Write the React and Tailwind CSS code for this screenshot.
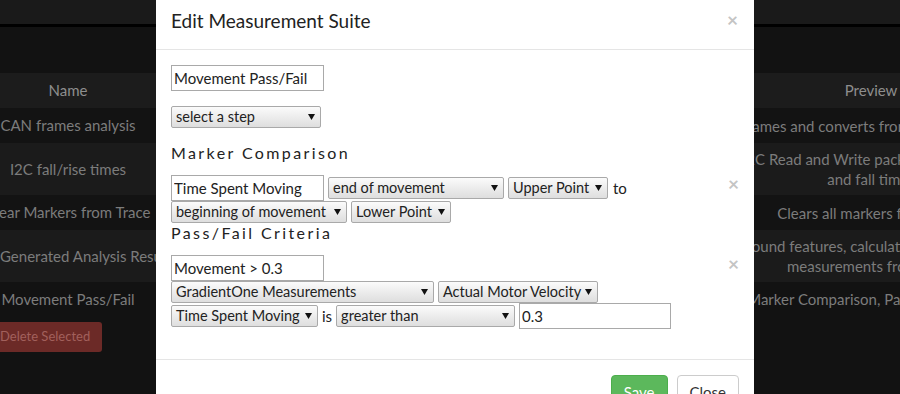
import React from 'react';

const Arrow = () => (
  <svg width="7" height="6" viewBox="0 0 7 6" className="shrink-0">
    <polygon points="0,0 7,0 3.5,6" fill="#111" />
  </svg>
);

const Select = ({ width, children }) => (
  <div
    className={`flex h-[22px] shrink-0 items-center justify-between gap-[4px] rounded-[2px] border border-[#a9a9a9] bg-linear-to-b from-[#fbfbfb] to-[#dedede] pl-[4px] pr-[5px] text-[14.5px] text-[#222] ${width}`}
  >
    <span className="whitespace-nowrap">{children}</span>
    <Arrow />
  </div>
);

const TextBox = ({ width, value }) => (
  <input
    readOnly
    value={value}
    className={`h-[26px] shrink-0 border border-[#a9a9a9] bg-white px-[2px] text-[15px] text-[#222] outline-none ${width}`}
  />
);

const Remove = () => (
  <span className="mt-[-1px] text-[19px] font-bold leading-[20px] text-[#c4c4c4]">×</span>
);

const rows = [
  { name: 'CAN frames analysis', preview: ['Parses CAN frames and converts from raw hex bytes into signals'], h: 'h-[35px]', bg: 'bg-[#131313]', left: false },
  { name: 'I2C fall/rise times', preview: ['Measures I2C Read and Write packets and computes its rise', 'and fall times'], h: 'h-[52px]', bg: 'bg-[#1b1b1b]', left: false },
  { name: 'Clear Markers from Trace', preview: ['Clears all markers from trace'], h: 'h-[35px]', bg: 'bg-[#131313]', left: false },
  { name: 'Generated Analysis Results', preview: ['Lists found features, calculations and key results', 'measurements from trace'], h: 'h-[52px]', bg: 'bg-[#1b1b1b]', left: true },
  { name: 'Movement Pass/Fail', preview: ['Marker Comparison, Pass/Fail Criteria'], h: 'h-[34px]', bg: 'bg-[#121212]', left: false },
];

export default function App() {
  return (
    <div className="relative h-[394px] w-[900px] overflow-hidden bg-[#121212] font-['Lato',sans-serif]">
      {/* page behind the modal */}
      <div className="h-[24px] bg-[#1a1a1a]" />
      <div className="h-[3px] bg-black" />
      <div className="h-[46px]" />
      <div className="ml-[-12px] w-[1003px] text-[15px] text-[#7c7c7c]">
        <div className="grid h-[35px] grid-cols-[160px_603px_240px] items-center bg-[#1c1c1c] text-[#8e8e8e]">
          <div className="text-center">Name</div>
          <div />
          <div className="text-center">Preview</div>
        </div>
        {rows.map((r) => (
          <div key={r.name} className={`grid grid-cols-[160px_603px_240px] items-center ${r.h} ${r.bg}`}>
            <div className={r.left ? 'whitespace-nowrap pl-[12px]' : 'flex justify-center whitespace-nowrap'}>{r.name}</div>
            <div />
            <div className="flex flex-col items-center leading-[20px]">
              {r.preview.map((line) => (
                <div key={line} className="whitespace-nowrap">{line}</div>
              ))}
            </div>
          </div>
        ))}
        <div className="mt-[6px] flex">
          <div className="flex h-[30px] items-center rounded-[3px] bg-[#6c2a27] px-[12px] text-[13px] text-[#a2605c]">
            Delete Selected
          </div>
        </div>
      </div>

      {/* modal */}
      <div className="absolute left-[156px] top-0 w-[598px] bg-white text-[#333]">
        <div className="flex h-[50px] items-start justify-between border-b border-[#e5e5e5] pl-[15px] pr-[16px] pt-[11px]">
          <h4 className="text-[19px] leading-[20px] text-[#222]">Edit Measurement Suite</h4>
          <Remove />
        </div>

        <div className="px-[15px] pb-[30px] pt-[15px]">
          <TextBox width="w-[153px]" value="Movement Pass/Fail" />
          <div className="mt-[15px]">
            <Select width="w-[150px]">select a step</Select>
          </div>

          <h5 className="mb-[12px] mt-[15px] text-[16px] leading-[20px] tracking-[2.4px] text-[#222]">Marker Comparison</h5>
          <div className="flex items-start justify-between">
            <div className="flex flex-col">
              <div className="flex items-center gap-[4px]">
                <TextBox width="w-[153px]" value="Time Spent Moving" />
                <Select width="w-[176px]">end of movement</Select>
                <Select width="w-[100px]">Upper Point</Select>
                <span className="ml-[1px] text-[15px] text-[#222]">to</span>
              </div>
              <div className="flex items-center gap-[4px]">
                <Select width="w-[176px]">beginning of movement</Select>
                <Select width="w-[100px]">Lower Point</Select>
              </div>
            </div>
            <Remove />
          </div>

          <h5 className="mb-[12px] text-[16px] leading-[20px] tracking-[2.4px] text-[#222]">Pass/Fail Criteria</h5>
          <div className="flex items-start justify-between">
            <div className="flex flex-col">
              <TextBox width="w-[153px]" value="Movement > 0.3" />
              <div className="flex items-center gap-[4px]">
                <Select width="w-[263px]">GradientOne Measurements</Select>
                <Select width="w-[160px]">Actual Motor Velocity</Select>
              </div>
              <div className="flex h-[26px] items-center gap-[4px]">
                <Select width="w-[147px]">Time Spent Moving</Select>
                <span className="text-[15px] text-[#222]">is</span>
                <Select width="w-[179px]">greater than</Select>
                <TextBox width="w-[152px]" value="0.3" />
              </div>
            </div>
            <Remove />
          </div>
        </div>

        <div className="flex justify-end gap-[9px] border-t border-[#e5e5e5] px-[15px] pb-[15px] pt-[15px]">
          <button className="h-[34px] rounded-[4px] border border-[#4cae4c] bg-[#5cb85c] px-[12px] text-[15px] text-white">
            Save
          </button>
          <button className="h-[34px] rounded-[4px] border border-[#ccc] bg-white px-[12px] text-[15px] text-[#333]">
            Close
          </button>
        </div>
      </div>
    </div>
  );
}
